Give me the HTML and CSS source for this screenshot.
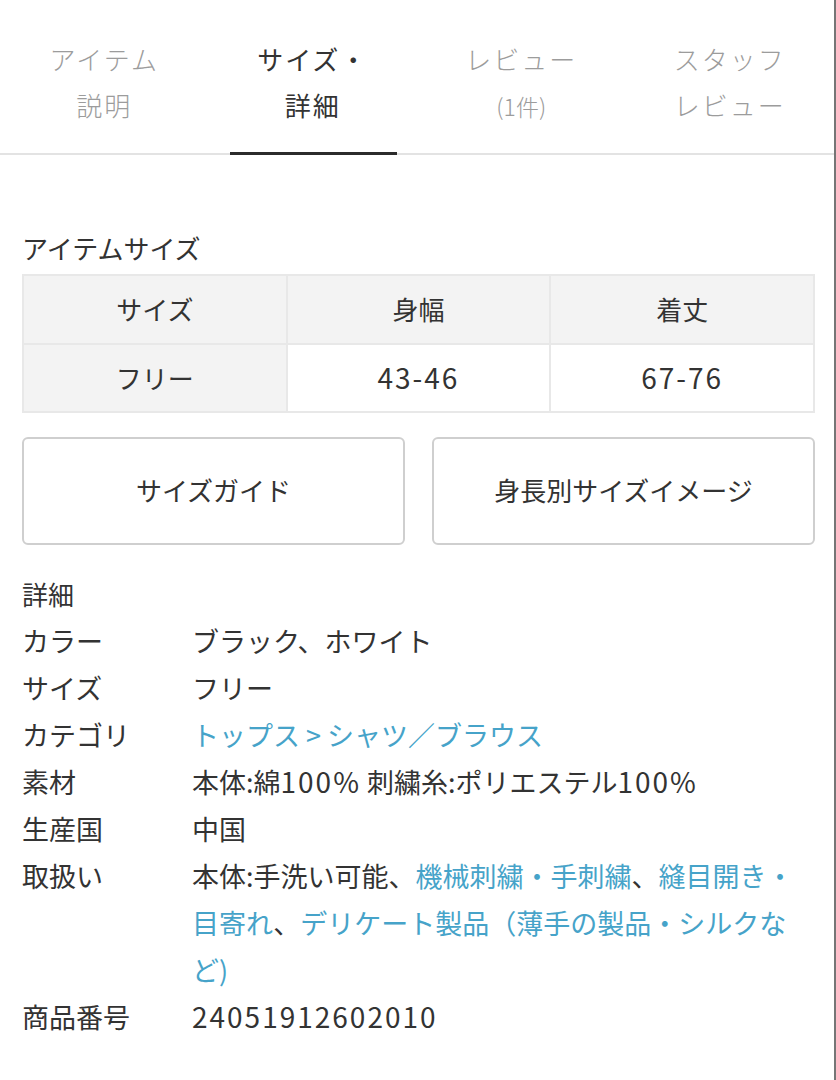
FILE: index.html
```html
<!DOCTYPE html>
<html lang="ja">
<head>
<meta charset="utf-8">
<title>サイズ・詳細</title>
<link rel="stylesheet" href="styles.css">
</head>
<body>
<div class="page">
  <nav class="tabs">
    <div class="tab">アイテム<br>説明</div>
    <div class="tab active">サイズ・<br>詳細</div>
    <div class="tab">レビュー<br><span class="count">(1件)</span></div>
    <div class="tab">スタッフ<br>レビュー</div>
  </nav>

  <section class="content">
    <h2 class="heading">アイテムサイズ</h2>
    <table class="size-table">
      <tr>
        <th>サイズ</th>
        <th>身幅</th>
        <th>着丈</th>
      </tr>
      <tr>
        <th>フリー</th>
        <td><span class="num">43-46</span></td>
        <td><span class="num">67-76</span></td>
      </tr>
    </table>

    <div class="buttons">
      <div class="btn">サイズガイド</div>
      <div class="btn">身長別サイズイメージ</div>
    </div>

    <h2 class="heading detail-heading">詳細</h2>
    <dl class="details">
      <dt>カラー</dt><dd>ブラック、ホワイト</dd>
      <dt>サイズ</dt><dd>フリー</dd>
      <dt>カテゴリ</dt><dd><span class="link">トップス &gt; シャツ／ブラウス</span></dd>
      <dt>素材</dt><dd>本体:綿<span class="num">100%</span> 刺繍糸:ポリエステル<span class="num">100%</span></dd>
      <dt>生産国</dt><dd>中国</dd>
      <dt>取扱い</dt><dd>本体:手洗い可能、<span class="link">機械刺繍・手刺繍</span>、<span class="link">縫目開き・目寄れ</span>、<span class="link">デリケート製品（薄手の製品・シルクなど)</span></dd>
      <dt>商品番号</dt><dd><span class="num">24051912602010</span></dd>
    </dl>
  </section>
</div>
</body>
</html>
```

FILE: styles.css
```css
* { box-sizing: border-box; }
html, body { margin: 0; padding: 0; background: #fff; }
body {
  font-family: "Noto Sans CJK JP", "Noto Sans", sans-serif;
  color: #333;
  font-size: 27px;
}
.page {
  width: 836px;
  min-height: 1080px;
  border-right: 2px solid #767676;
}
.tabs {
  display: grid;
  grid-template-columns: repeat(4, 1fr);
  border-bottom: 2px solid #e3e3e3;
  height: 155px;
}
.tab {
  position: relative;
  text-align: center;
  color: #9c9c9c;
  font-size: 26px;
  letter-spacing: 2px;
  line-height: 46px;
  padding-top: 36px;
  font-weight: 300;
}
.tab .count { font-size: 23px; letter-spacing: 0; }
.tab.active { color: #333; font-weight: 400; }
.tab.active::after {
  content: "";
  position: absolute;
  left: 21px;
  right: 20px;
  bottom: -2px;
  height: 3px;
  background: #2b2b2b;
}
.content { padding: 0 19px 0 22px; }
.heading {
  font-size: 26px;
  font-weight: 400;
  line-height: 40px;
  margin: 73px 0 6px;
}
.num { font-size: 28px; letter-spacing: 2px; }
.size-table {
  width: 100%;
  border-collapse: collapse;
  table-layout: fixed;
  border: 2px solid #e8e8e8;
}
.size-table th, .size-table td {
  border: 2px solid #e8e8e8;
  font-weight: 400;
  text-align: center;
  padding: 0;
  font-size: 26px;
}
.size-table tr:first-child th,
.size-table tr:first-child td { height: 69px; padding-bottom: 2px; }
.size-table tr:last-child th,
.size-table tr:last-child td { height: 68px; padding-bottom: 2px; }
.size-table th { background: #f3f3f3; }
.size-table td { background: #fff; }
.buttons {
  display: grid;
  grid-template-columns: 1fr 1fr;
  gap: 27px;
  margin-top: 24px;
}
.btn {
  height: 108px;
  border: 2px solid #cfcfcf;
  border-radius: 6px;
  display: flex;
  align-items: center;
  justify-content: center;
  font-size: 26px;
  padding-bottom: 4px;
}
.detail-heading {
  margin: 25px 0 0;
  line-height: 47px;
}
.details {
  display: grid;
  grid-template-columns: 170px 1fr;
  margin: 0;
  line-height: 47px;
}
.details dt, .details dd { margin: 0; }
.link { color: #46a3c9; }
```
